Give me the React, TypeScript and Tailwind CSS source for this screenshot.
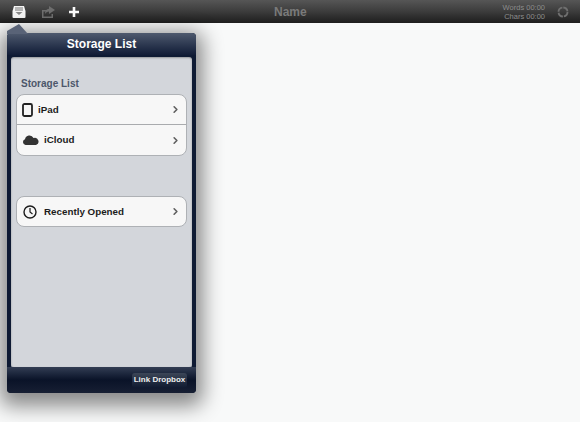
import { ChevronRight } from "lucide-react";

function Row({ icon, label, gap, height }: { icon: React.ReactNode; label: string; gap: string; height: string }) {
  return (
    <div className={`flex items-center pl-[5px] pr-[5px] ${height}`}>
      <div className={`flex items-center justify-center ${gap}`}>{icon}</div>
      <span className="pt-px text-[9.8px] font-bold text-[#1c1c1c]">{label}</span>
      <ChevronRight className="ml-auto h-[11px] w-[11px] text-[#5f5f5f]" strokeWidth={3.5} />
    </div>
  );
}

export default function App() {
  return (
    <div className="relative h-[422px] w-[580px] overflow-hidden bg-[#f8f9f9] font-['Liberation_Sans',Arial,sans-serif]">
      <header className="flex h-[23px] items-center bg-gradient-to-b from-[#565656] via-[#3c3c3c] to-[#1e1e1e] pl-[12px] pr-[11px]">
        <div className="flex items-center gap-[15px]">
          <svg width="14" height="14" viewBox="0 0 14 14">
            <path d="M2 1h10l1.500 5v6a1 1 0 0 1-1 1h-11a1 1 0 0 1-1-1V6z" fill="#f4f4f4" />
            <path d="M3 3h8M3 5h8" stroke="#777" strokeWidth="1" />
            <path d="M3.500 7l3.500 3 3.500-3z" fill="#888" />
          </svg>
          <svg width="14" height="12" viewBox="0 0 14 12">
            <path d="M1 4h5v1.500H2.500v5h8V8H12v4H1z" fill="#6e6e6e" />
            <path d="M8 0l6 4-6 4V5.500C6 5.500 5 6.500 4 8c0-3 1.500-5 4-5.200z" fill="#6e6e6e" />
          </svg>
          <svg width="12" height="12" viewBox="0 0 12 12" className="-ml-[2px]">
            <path d="M6 1v10M1 6h10" stroke="#fafafa" strokeWidth="2.600" />
          </svg>
        </div>
        <span className="ml-[194px] text-[12px] font-bold text-[#7a7a7a]">Name</span>
        <div className="ml-auto flex items-center gap-[12px]">
          <div className="text-right text-[7.5px] leading-[9px] text-[#8c8c8c]">
            <div>Words 00:00</div>
            <div>Chars 00:00</div>
          </div>
          <svg width="12" height="12" viewBox="0 0 12 12" fill="none">
            <circle cx="6" cy="6" r="4.500" stroke="#6f6f6f" strokeWidth="1.800" strokeDasharray="6 1" />
          </svg>
        </div>
      </header>

      <div className="absolute left-[7px] top-[33px] flex h-[360px] w-[189px] flex-col rounded-[4px] bg-[#0e1a33] px-[4px] shadow-[0_6px_20px_7px_rgba(0,0,0,0.45)]">
        <svg width="28" height="10" viewBox="0 0 28 10" className="absolute -top-[9px] left-0">
          <path d="M0 10V7L12 0l9 10z" fill="#596377" />
        </svg>
        <div className="-mx-[4px] flex h-[22px] items-center justify-center rounded-t-[4px] bg-gradient-to-b from-[#4f5a6e] to-[#111c36] text-[12px] font-bold text-white">
          Storage List
        </div>
        <div className="mt-[2px] h-[310px] flex-none rounded-[3px] bg-[#d3d6db] px-[5px] shadow-[inset_0_1px_2px_rgba(0,0,0,0.3),0_1px_0_rgba(255,255,255,0.6)]">
          <div className="mb-[4px] mt-[20px] pl-[5px] text-[10px] font-bold leading-[13px] text-[#4c566a]">Storage List</div>
          <div className="rounded-[8px] border border-[#aeb1b5] bg-[#f7f7f7]">
            <Row
              label="iPad"
              gap="mr-[5px]"
              height="h-[29px]"
              icon={
                <svg width="11" height="14" viewBox="0 0 11 14" fill="none">
                  <rect x="1" y="1" width="9" height="12" rx="1.500" stroke="#222" strokeWidth="1.800" />
                </svg>
              }
            />
            <div className="h-px bg-[#a9abae]" />
            <Row
              label="iCloud"
              gap="mr-[5px]"
              height="h-[30px]"
              icon={
                <svg width="17" height="10" viewBox="0 0 17 10">
                  <path d="M3.500 10a3 3 0 0 1-.5-5.800A4.500 4.500 0 0 1 11.500 3 3.500 3.500 0 0 1 14 10z" fill="#333" />
                </svg>
              }
            />
          </div>
          <div className="mt-[40px] rounded-[8px] border border-[#aeb1b5] bg-[#f7f7f7]">
            <Row
              label="Recently Opened"
              gap="mr-[7px] ml-px"
              height="h-[29px]"
              icon={
                <svg width="14" height="14" viewBox="0 0 14 14" fill="none" stroke="#1c1c1c">
                  <circle cx="7" cy="7" r="6" strokeWidth="1.400" />
                  <path d="M7 3v4l2.500 2" strokeWidth="1.200" />
                </svg>
              }
            />
          </div>
        </div>
        <div className="-mx-[4px] flex flex-1 items-center justify-end rounded-b-[4px] bg-gradient-to-b from-[#333e54] via-[#0a1328] to-[#171f33] pr-[9px]">
          <button className="flex h-[15px] w-[55px] items-center justify-center rounded-[3px] bg-gradient-to-b from-[#3c4657] to-[#101a30] text-[8px] font-bold text-[#eee]">
            Link Dropbox
          </button>
        </div>
      </div>
    </div>
  );
}
